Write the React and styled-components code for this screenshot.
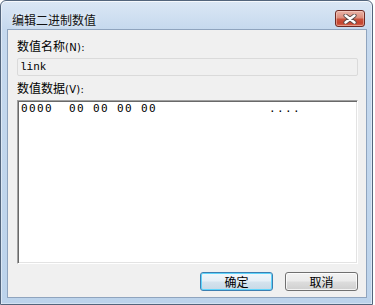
import React from "react";
import styled, { createGlobalStyle } from "styled-components";

const Global = createGlobalStyle`
  html, body { margin: 0; padding: 0; background: #ffffff; }
  body { font-family: "Noto Sans CJK SC", "Noto Sans", sans-serif; }
`;

const Window = styled.div`
  width: 373px;
  height: 305px;
  box-sizing: border-box;
  border: 1px solid #53657c;
  border-radius: 6px 6px 0 0;
  background: linear-gradient(180deg, #dbe7f5 0px, #c6d9ee 28px, #bcd3eb 100%);
  box-shadow: inset 0 1px 0 rgba(255, 255, 255, 0.75),
    inset 1px 0 0 rgba(255, 255, 255, 0.45),
    inset -1px 0 0 rgba(255, 255, 255, 0.45),
    inset 0 -1px 0 rgba(255, 255, 255, 0.35);
  display: flex;
  flex-direction: column;
  padding: 0 5px 6px 6px;
  overflow: hidden;
`;

const TitleBar = styled.div`
  height: 28px;
  flex: none;
  display: flex;
  align-items: flex-start;
  padding-left: 5px;
`;

const Title = styled.div`
  flex: 1;
  margin-top: 12px;
  font-size: 12px;
  line-height: 14px;
  color: #111;
  text-shadow: 0 0 6px rgba(255, 255, 255, 0.9);
`;

const CloseButton = styled.div`
  margin-top: 9px;
  margin-right: 2px;
  width: 30px;
  height: 17px;
  box-sizing: border-box;
  border: 1px solid #6e2a24;
  border-radius: 3px;
  background: linear-gradient(180deg, #eab4a8 0%, #dc8d7c 45%, #c9513c 55%, #c4442f 80%, #d46a52 100%);
  box-shadow: inset 0 0 0 1px rgba(255, 220, 210, 0.45);
  display: flex;
  align-items: center;
  justify-content: center;
`;

const Client = styled.div`
  flex: 1;
  border: 1px solid #8fa4be;
  background: #f0f0f0;
  padding: 9px 8px 0 9px;
  display: flex;
  flex-direction: column;
`;

const Label = styled.div`
  font-size: 12px;
  line-height: 14px;
  color: #000;
  margin-top: ${(p) => p.$gap || 0}px;
  white-space: pre;
`;

const Hotkey = styled.span`
  font-family: "DejaVu Sans", sans-serif;
  font-size: 10px;
  letter-spacing: 0.3px;
`;

const ReadField = styled.div`
  margin-top: 3px;
  height: 18px;
  box-sizing: border-box;
  border: 1px solid #dadada;
  border-radius: 2px;
  background: #f0f0f0;
  padding-left: 2px;
  font-family: "Liberation Mono", monospace;
  font-size: 11px;
  line-height: 16px;
  color: #000;
`;

const HexBox = styled.div`
  margin-top: 3px;
  height: 164px;
  box-sizing: border-box;
  border-style: solid;
  border-width: 1px;
  border-color: #a0a0a0 #ffffff #ffffff #a0a0a0;
  box-shadow: inset 1px 1px 0 #696969, inset -1px -1px 0 #e3e3e3;
  background: #ffffff;
  padding: 1px 0 0 3px;
  font-family: "DejaVu Sans Mono", monospace;
  font-size: 11px;
  line-height: 13px;
  letter-spacing: 1.38px;
  white-space: pre;
  color: #000;
`;

const ButtonRow = styled.div`
  margin-top: 8px;
  display: flex;
  justify-content: flex-end;
  gap: 12px;
`;

const Button = styled.div`
  width: 73px;
  height: 19px;
  box-sizing: border-box;
  border-radius: 3px;
  border: 1px solid ${(p) => (p.$default ? "#3c7fb1" : "#707070")};
  background: ${(p) =>
    p.$default
      ? "linear-gradient(180deg, #f2f7fb 0%, #e6eff6 48%, #d5e3ee 52%, #c8d9e6 100%)"
      : "linear-gradient(180deg, #f2f2f2 0%, #ebebeb 48%, #dddddd 52%, #cfcfcf 100%)"};
  box-shadow: ${(p) =>
    p.$default
      ? "inset 0 0 0 1px #5fd4fb"
      : "inset 0 0 0 1px rgba(255,255,255,0.75)"};
  display: flex;
  align-items: center;
  justify-content: center;
  font-size: 12px;
  line-height: 14px;
  color: #000;
`;

function CloseIcon() {
  return (
    <svg width="14" height="10" viewBox="0 0 14 10">
      <path d="M2.5 1.5 L11.5 8.5 M11.5 1.5 L2.5 8.5" stroke="#5a4a48" strokeWidth="4.2" strokeLinecap="round" />
      <path d="M2.5 1.5 L11.5 8.5 M11.5 1.5 L2.5 8.5" stroke="#ffffff" strokeWidth="2.4" strokeLinecap="round" />
    </svg>
  );
}

export default function App() {
  const hexLine = "0000  00 00 00 00" + " ".repeat(14) + "....";
  return (
    <>
      <Global />
      <Window>
        <TitleBar>
          <Title>编辑二进制数值</Title>
          <CloseButton>
            <CloseIcon />
          </CloseButton>
        </TitleBar>
        <Client>
          <Label>
            数值名称<Hotkey>(N):</Hotkey>
          </Label>
          <ReadField>link</ReadField>
          <Label $gap={5}>
            数值数据<Hotkey>(V):</Hotkey>
          </Label>
          <HexBox>{hexLine}</HexBox>
          <ButtonRow>
            <Button $default>确定</Button>
            <Button>取消</Button>
          </ButtonRow>
        </Client>
      </Window>
    </>
  );
}
